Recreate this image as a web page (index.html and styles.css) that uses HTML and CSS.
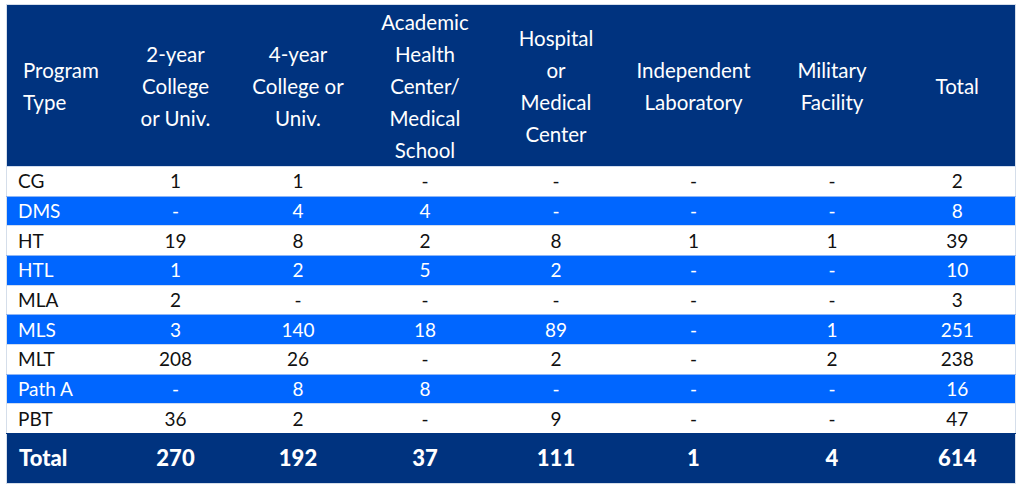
FILE: index.html
```html
<!DOCTYPE html>
<html lang="en">
<head>
<meta charset="utf-8">
<title>Program Types</title>
<link rel="stylesheet" href="styles.css">
</head>
<body>
<div class="wrap">
<table class="grid">
  <colgroup>
    <col class="c1"><col class="c2"><col class="c3"><col class="c4"><col class="c5"><col class="c6"><col class="c7"><col class="c8">
  </colgroup>
  <thead>
    <tr>
      <th class="first">Program<br>Type</th>
      <th>2-year<br>College<br>or Univ.</th>
      <th>4-year<br>College or<br>Univ.</th>
      <th>Academic<br>Health<br>Center/<br>Medical<br>School</th>
      <th>Hospital<br>or<br>Medical<br>Center</th>
      <th>Independent<br>Laboratory</th>
      <th>Military<br>Facility</th>
      <th>Total</th>
    </tr>
  </thead>
  <tbody>
    <tr><td class="first">CG</td><td>1</td><td>1</td><td>-</td><td>-</td><td>-</td><td>-</td><td>2</td></tr>
    <tr class="alt"><td class="first">DMS</td><td>-</td><td>4</td><td>4</td><td>-</td><td>-</td><td>-</td><td>8</td></tr>
    <tr><td class="first">HT</td><td>19</td><td>8</td><td>2</td><td>8</td><td>1</td><td>1</td><td>39</td></tr>
    <tr class="alt"><td class="first">HTL</td><td>1</td><td>2</td><td>5</td><td>2</td><td>-</td><td>-</td><td>10</td></tr>
    <tr><td class="first">MLA</td><td>2</td><td>-</td><td>-</td><td>-</td><td>-</td><td>-</td><td>3</td></tr>
    <tr class="alt"><td class="first">MLS</td><td>3</td><td>140</td><td>18</td><td>89</td><td>-</td><td>1</td><td>251</td></tr>
    <tr><td class="first">MLT</td><td>208</td><td>26</td><td>-</td><td>2</td><td>-</td><td>2</td><td>238</td></tr>
    <tr class="alt"><td class="first">Path A</td><td>-</td><td>8</td><td>8</td><td>-</td><td>-</td><td>-</td><td>16</td></tr>
    <tr><td class="first">PBT</td><td>36</td><td>2</td><td>-</td><td>9</td><td>-</td><td>-</td><td>47</td></tr>
  </tbody>
  <tfoot>
    <tr><td class="first">Total</td><td>270</td><td>192</td><td>37</td><td>111</td><td>1</td><td>4</td><td>614</td></tr>
  </tfoot>
</table>
</div>
</body>
</html>
```

FILE: styles.css
```css
html, body {
  margin: 0;
  padding: 0;
  background: #ffffff;
}

.wrap {
  padding: 4px 9px 0 6px;
}

.grid {
  width: 1009px;
  border-collapse: collapse;
  table-layout: fixed;
  font-family: "Lato", "Noto Sans", sans-serif;
  border: 1px solid #d5deea;
}

.c1 { width: 109px; }
.c2 { width: 120px; }
.c3 { width: 125px; }
.c4 { width: 129px; }
.c5 { width: 133px; }
.c6 { width: 142px; }
.c7 { width: 135px; }
.c8 { width: 116px; }

.grid th {
  background: #00337f;
  color: #ffffff;
  font-weight: 400;
  font-size: 20.5px;
  line-height: 32px;
  height: 161px;
  padding: 0;
  text-align: center;
  vertical-align: middle;
}

.grid th.first {
  text-align: left;
  padding-left: 16px;
}

.grid td {
  height: 29.67px;
  box-sizing: border-box;
  padding: 0;
  line-height: 20px;
  text-align: center;
  vertical-align: middle;
  font-size: 19px;
  color: #111111;
  border-top: 1px solid #cfdcf0;
}

.grid td.first {
  text-align: left;
  padding-left: 11px;
}

.grid tbody tr.alt td {
  background: #0066ff;
  color: #ffffff;
  border-top-color: #8fb6f5;
}

.grid tfoot td {
  background: #00337f;
  color: #ffffff;
  font-weight: 900;
  font-size: 22px;
  line-height: 26px;
  height: 50px;
  border-top: 1px solid #00337f;
}

.grid tfoot td.first {
  padding-left: 12px;
}
```
